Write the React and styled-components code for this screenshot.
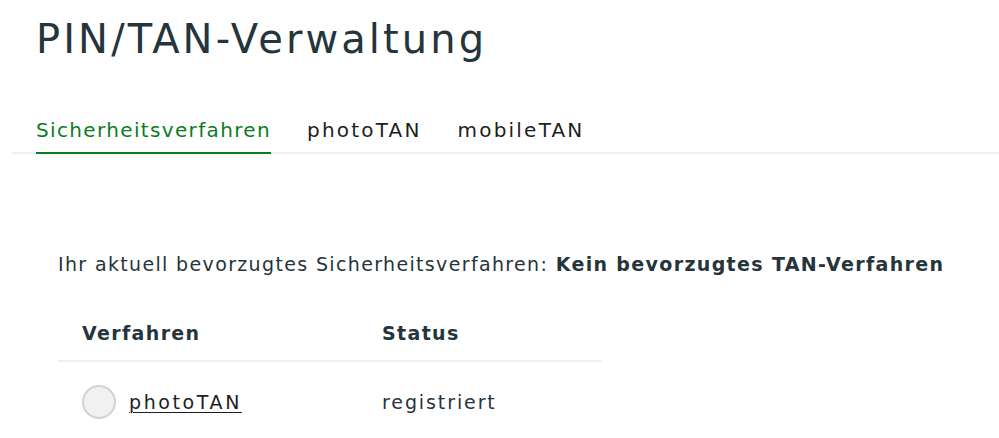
import React from 'react'
import styled, { createGlobalStyle } from 'styled-components'

const GlobalStyle = createGlobalStyle`
    body {
        margin: 0;
        background: #ffffff;
        font-family: 'DejaVu Sans', 'Liberation Sans', sans-serif;
        color: #26343b;
    }
`

const Page = styled.div`
    width: 999px;
    height: 438px;
    overflow: hidden;
    padding-left: 12px;
    box-sizing: border-box;
`

const Title = styled.h1`
    margin: 0;
    padding: 14px 0 0 24px;
    font-size: 40px;
    font-weight: 400;
    line-height: 50px;
    letter-spacing: 3.1px;
    color: #26343b;
`

const TabBar = styled.div`
    display: flex;
    gap: 36px;
    margin-top: 52px;
    padding-left: 24px;
    border-bottom: 2px solid #efefef;
`

const Tab = styled.div`
    font-size: 20px;
    line-height: 28px;
    letter-spacing: ${(props) => (props.active ? '1.35px' : '2.2px')};
    padding-bottom: 8px;
    margin-bottom: -2px;
    color: ${(props) => (props.active ? '#0b7d1f' : '#1b1f23')};
    border-bottom: 2px solid ${(props) => (props.active ? '#0b7d1f' : 'transparent')};
`

const Content = styled.div`
    padding: 96px 0 0 46px;
    font-size: 19px;
    line-height: 28px;
    letter-spacing: 1.35px;
`

const Preferred = styled.p`
    margin: 0;
    color: #26343b;

    strong {
        font-weight: 700;
    }
`

const Table = styled.div`
    width: 544px;
    margin-top: 38px;
`

const Row = styled.div`
    display: grid;
    grid-template-columns: 300px 1fr;
    align-items: center;
    padding-left: 24px;
    border-bottom: ${(props) => (props.head ? '2px solid #efefef' : 'none')};
    height: ${(props) => (props.head ? '44px' : '60px')};
`

const HeadCell = styled.div`
    font-weight: 700;
    padding-bottom: 10px;
`

const Cell = styled.div`
    display: flex;
    align-items: center;
    gap: 13px;
    padding-top: 20px;
    letter-spacing: 1.9px;
`

const Radio = styled.span`
    width: 30px;
    height: 30px;
    border-radius: 50%;
    border: 2px solid #d3d3d3;
    background: #f1f1f1;
    flex: none;
`

const Link = styled.a`
    color: #1b1f23;
    letter-spacing: 2.6px;
    text-decoration: underline;
    text-underline-offset: 3px;
    text-decoration-thickness: 1px;
`

const App = () => (
    <Page>
        <GlobalStyle />
        <Title>PIN/TAN-Verwaltung</Title>
        <TabBar>
            <Tab active>Sicherheitsverfahren</Tab>
            <Tab>photoTAN</Tab>
            <Tab>mobileTAN</Tab>
        </TabBar>
        <Content>
            <Preferred>
                Ihr aktuell bevorzugtes Sicherheitsverfahren: <strong>Kein bevorzugtes TAN-Verfahren</strong>
            </Preferred>
            <Table>
                <Row head>
                    <HeadCell>Verfahren</HeadCell>
                    <HeadCell>Status</HeadCell>
                </Row>
                <Row>
                    <Cell>
                        <Radio />
                        <Link href="#">photoTAN</Link>
                    </Cell>
                    <Cell>registriert</Cell>
                </Row>
            </Table>
        </Content>
    </Page>
)

export default App
